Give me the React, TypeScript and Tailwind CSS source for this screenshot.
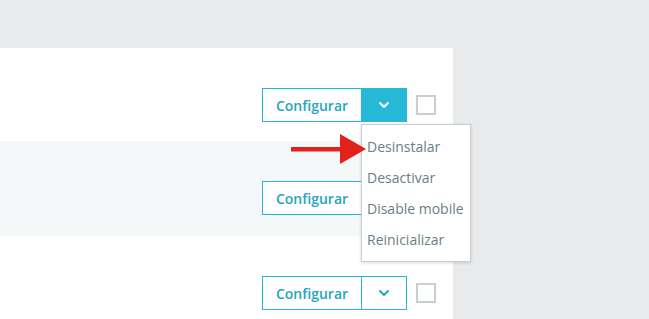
import { ChevronDown } from 'lucide-react'

function ModuleActions({ open }: { open?: boolean }) {
  return (
    <div className="flex items-center">
      <button className="w-[100px] h-[34px] border border-[#25b9d7] bg-white text-[14px] font-semibold text-[#25a5c0]">
        Configurar
      </button>
      <button
        className={
          open
            ? 'w-[45px] h-[34px] border border-l-0 border-[#25b9d7] bg-[#25b9d7] flex items-center justify-center'
            : 'w-[45px] h-[34px] border border-l-0 border-[#25b9d7] bg-white flex items-center justify-center'
        }
      >
        <ChevronDown size={16} strokeWidth={3} className={open ? 'text-white' : 'text-[#25a5c0]'} />
      </button>
      <div className="ml-[9px] w-[20px] h-[20px] border-2 border-[#c8cfd2] bg-white" />
    </div>
  )
}

export default function App() {
  return (
    <div
      className="relative w-[649px] h-[319px] overflow-hidden bg-[#e9eaec]"
      style={{ fontFamily: '"Open Sans", "Liberation Sans", sans-serif' }}
    >
      <div className="mt-[48px] w-[453px] bg-white">
        <div className="h-[93px] flex items-start justify-end pt-[40px] pr-[17px]">
          <ModuleActions open />
        </div>
        <div className="h-[95px] flex items-start justify-end pt-[40px] pr-[17px] bg-[#f5f8f9]">
          <ModuleActions />
        </div>
        <div className="h-[95px] flex items-start justify-end pt-[40px] pr-[17px]">
          <ModuleActions />
        </div>
      </div>

      <div className="absolute left-[361px] top-[124px] w-[110px] py-[6px] bg-white border border-[#c8cfd2] shadow-[0_1px_3px_rgba(0,0,0,0.15)]">
        {['Desinstalar', 'Desactivar', 'Disable mobile', 'Reinicializar'].map((t) => (
          <div key={t} className="h-[31px] flex items-center pl-[5px] text-[14px] text-[#6c7e85] whitespace-nowrap">
            {t}
          </div>
        ))}
      </div>

      <svg className="absolute left-[290px] top-[133px]" width="78" height="32" viewBox="0 0 78 32">
        <rect x="1" y="14" width="52" height="4.5" fill="#e3201b" />
        <polygon points="50,1 76,16 50,31" fill="#e3201b" />
      </svg>
    </div>
  )
}
